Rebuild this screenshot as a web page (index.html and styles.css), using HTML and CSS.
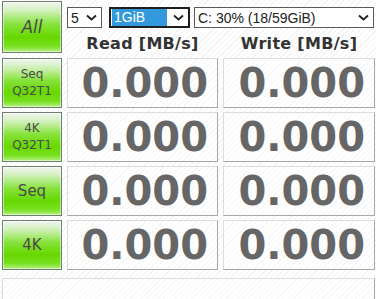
FILE: index.html
```html
<!DOCTYPE html>
<html lang="en">
<head>
    <meta charset="UTF-8">
    <title>CrystalDiskMark</title>
    <link rel="stylesheet" href="styles.css">
</head>
<body>
    <div class="main">
        <button class="test-btn big">All</button>
        <div class="head">
            <div class="selects">
                <div class="sel sel-count"><span class="val">5</span>
                    <svg class="chev" width="11" height="7" viewBox="0 0 11 7"><path d="M1 1.5 L5.5 5.5 L10 1.5" fill="none" stroke="#222" stroke-width="1.8"/></svg>
                </div>
                <div class="sel sel-size focus"><span class="val hl">1GiB</span>
                    <svg class="chev" width="11" height="7" viewBox="0 0 11 7"><path d="M1 1.5 L5.5 5.5 L10 1.5" fill="none" stroke="#222" stroke-width="1.8"/></svg>
                </div>
                <div class="sel sel-drive"><span class="val">C: 30% (18/59GiB)</span>
                    <svg class="chev" width="11" height="7" viewBox="0 0 11 7"><path d="M1 1.5 L5.5 5.5 L10 1.5" fill="none" stroke="#222" stroke-width="1.8"/></svg>
                </div>
            </div>
            <div class="titles">
                <div class="title">Read [MB/s]</div>
                <div class="title">Write [MB/s]</div>
            </div>
        </div>

        <button class="test-btn">Seq<br>Q32T1</button>
        <div class="result">0.000</div>
        <div class="result">0.000</div>

        <button class="test-btn">4K<br>Q32T1</button>
        <div class="result">0.000</div>
        <div class="result">0.000</div>

        <button class="test-btn mid">Seq</button>
        <div class="result">0.000</div>
        <div class="result">0.000</div>

        <button class="test-btn mid">4K</button>
        <div class="result">0.000</div>
        <div class="result">0.000</div>
    </div>
    <div class="comment"></div>
</body>
</html>
```

FILE: styles.css
```css
/* CrystalDiskMark style main window */
body {
    margin: 0;
    padding: 1px 1px 0 2px;
    font-family: "DejaVu Sans", Verdana, sans-serif;
    background: repeating-linear-gradient(135deg, #ffffff 0, #ffffff 3px, #f3f3f3 3px, #f3f3f3 4px);
    overflow: hidden;
}

.main {
    display: grid;
    grid-template-columns: 60px 151px 152px;
    grid-template-rows: 53px 50px 50px 50px 50px;
    column-gap: 5px;
    row-gap: 4px;
}

.test-btn {
    margin: 0;
    padding: 0;
    border: 1px solid #6f7f6f;
    box-shadow: inset 0 0 0 1px rgba(255, 255, 255, 0.5);
    background: linear-gradient(to bottom, #f4f4f4 0%, #d0f0b8 18%, #86e23a 45%, #66d800 70%, #78e020 88%, #b4f080 100%);
    color: #4a4a4a;
    font-family: "DejaVu Sans", Verdana, sans-serif;
    font-size: 12px;
    line-height: 17px;
    height: 50px;
    cursor: pointer;
}

.test-btn.big {
    font-size: 17px;
    font-style: italic;
    height: 52px;
}

.test-btn.mid {
    font-size: 15px;
}

.head {
    grid-column: 2 / 4;
    display: flex;
    flex-direction: column;
}

.selects {
    display: flex;
    margin-top: 6px;
    height: 21px;
}

.sel {
    display: flex;
    align-items: center;
    justify-content: space-between;
    border: 1px solid #5a5a5a;
    background: #fff;
    padding: 0 4px 0 3px;
    font-family: "Liberation Sans", Arial, sans-serif;
    font-size: 14px;
    color: #222;
    box-sizing: border-box;
    height: 21px;
}

.sel-count {
    width: 35px;
}

.sel-size {
    width: 81px;
    margin-left: 7px;
    padding-left: 1px;
}

.sel-size.focus {
    border: 2px solid #1e1e1e;
}

.sel-drive {
    width: 180px;
    margin-left: 4px;
}

.hl {
    background: #3399dd;
    color: #fff;
    flex: 1;
    margin-right: 6px;
    padding-left: 2px;
    line-height: 17px;
}

.titles {
    display: grid;
    grid-template-columns: 151px 152px;
    column-gap: 5px;
    margin-top: 6px;
}

.title {
    text-align: center;
    font-weight: bold;
    font-size: 16px;
    color: #333;
    letter-spacing: 0.3px;
}

.result {
    border: 1px solid #dcdcdc;
    border-right-color: #a8a8a8;
    border-bottom-color: #a8a8a8;
    background: repeating-linear-gradient(135deg, #ffffff 0, #ffffff 3px, #f7f7f7 3px, #f7f7f7 4px);
    text-align: right;
    padding-right: 9px;
    font-size: 40px;
    font-weight: bold;
    color: #666666;
    line-height: 48px;
}

.comment {
    margin-top: 8px;
    height: 30px;
    border: 1px solid #dcdcdc;
    border-right-color: #a8a8a8;
    background: repeating-linear-gradient(135deg, #ffffff 0, #ffffff 3px, #f7f7f7 3px, #f7f7f7 4px);
}
```
